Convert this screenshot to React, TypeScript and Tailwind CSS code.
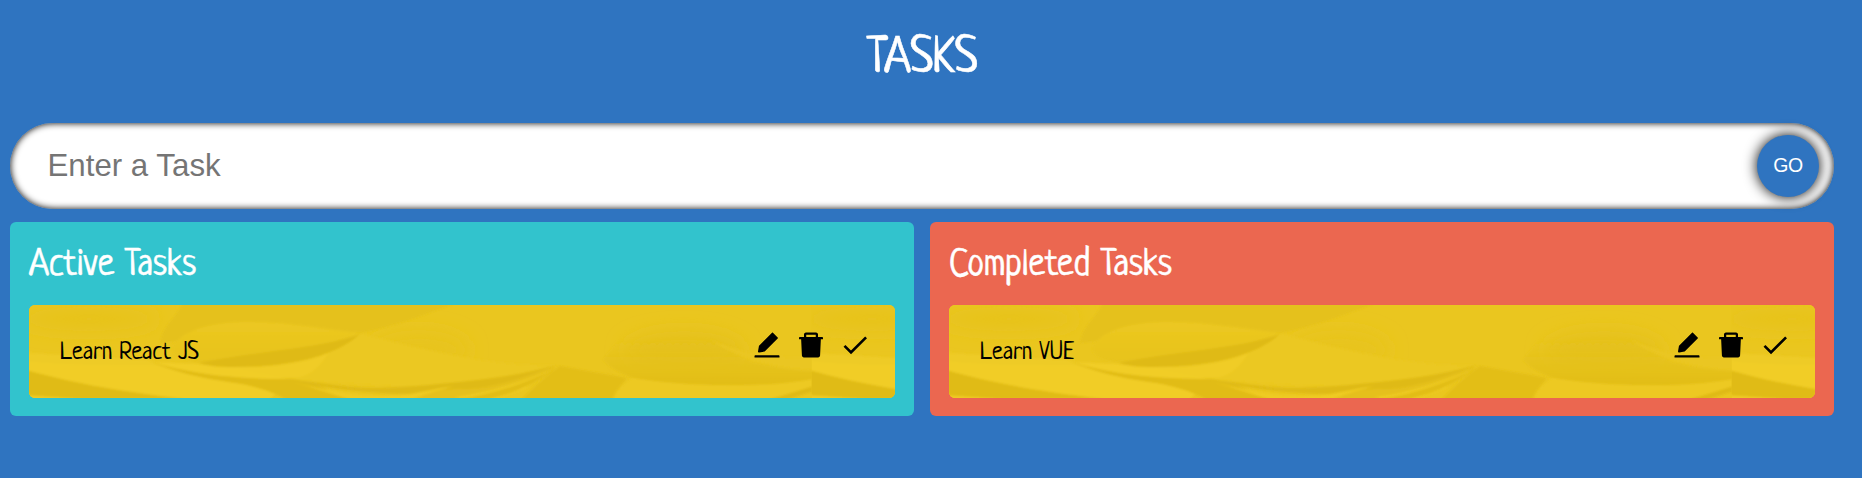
import React from "react";
import { AiFillDelete, AiFillEdit } from "react-icons/ai";
import { MdDone } from "react-icons/md";

const handwriting = "font-['Neucha','Lato',sans-serif]";

function Folds() {
  return (
    <svg
      className="absolute inset-0 h-full w-full"
      viewBox="0 0 866 93"
      preserveAspectRatio="none"
      aria-hidden="true"
    >
      <defs>
        <filter id="soft" x="-5%" y="-20%" width="110%" height="140%">
          <feGaussianBlur stdDeviation="1" />
        </filter>
        <filter id="haze" x="-50%" y="-150%" width="200%" height="400%">
          <feGaussianBlur stdDeviation="9" />
        </filter>
        <linearGradient id="bowl" x1="0" y1="0" x2="0" y2="1">
          <stop offset="0.4" stopColor="#e6c21b" stopOpacity="0" />
          <stop offset="0.75" stopColor="#e5c11a" stopOpacity="0.8" />
          <stop offset="1" stopColor="#e2bd18" />
        </linearGradient>
        <linearGradient id="leaf" x1="0" y1="0" x2="0" y2="1">
          <stop offset="0" stopColor="#ecc821" />
          <stop offset="1" stopColor="#e7c31c" />
        </linearGradient>
        <clipPath id="tileEdge">
          <rect width="782.7" height="93" />
        </clipPath>
        <g id="tile" clipPath="url(#tileEdge)">
          <rect width="783" height="93" fill="#eac61f" />
          <ellipse cx="60" cy="14" rx="70" ry="12" fill="#e7c31c" filter="url(#haze)" />
          <ellipse cx="390" cy="45" rx="50" ry="20" fill="#e8c41c" filter="url(#haze)" />
          <ellipse cx="655" cy="46" rx="60" ry="20" fill="#e5c11a" filter="url(#haze)" />
          <g filter="url(#soft)">
            <path d="M154 -4 C150 12 134 18 131 38 L148 36 C160 24 190 17 218 17 C260 17 295 24 331 28 C365 22 400 8 432 -4Z" fill="#e5c11a" />
            <path d="M146 38 C160 22 190 17 218 17 C260 17 295 24 331 28 C290 45 230 50 171 57 C150 55 138 48 146 38Z" fill="url(#leaf)" />
            <path d="M331 28 C310 48 260 62 204 62 L165 59 L254 74 C320 78 380 86 431 77 C480 72 505 66 528 60 C480 62 420 52 331 28Z" fill="#ebc820" />
            <path d="M175 60 C230 66 280 58 300 47 C292 60 284 70 268 73 L230 72Z" fill="#f0cc25" />
            <path d="M-3 47 C40 54 80 57 121 57 L190 60 L260 74 L240 95 L-3 95Z" fill="#f1cd27" />
            <path d="M0 56 C30 60 90 60 135 60 L120 55 L0 48Z" fill="#eecb25" />
            <path d="M331 29 C295 43 230 46 169 58 C180 61 190 62 204 62 C260 62 305 52 331 29Z" fill="#dfba14" />
            <path d="M-3 65 C40 77 80 85 155 94 L-3 94Z" fill="#e0bb15" />
            <path d="M-3 90 L55 94 L-3 94Z" fill="#efcb25" />
            <path d="M121 57 C165 69 200 74 262 74 C290 78 300 86 322 95 L258 95 C245 87 224 80 200 77 C170 73 145 66 121 57Z" fill="#e1bc16" />
            <path d="M254 74 C290 77 320 84 351 83 C380 82 400 80 431 77 C470 73 500 68 528 60 C505 70 470 82 440 84 C410 86 390 91 352 88 C315 86 285 80 254 74Z" fill="#dfba14" />
            <path d="M262 76 C290 84 320 91 350 91 C380 92 400 84 425 81 L378 95 L322 95Z" fill="#efcb24" />
            <path d="M385 95 C400 86 420 83 435 84 C470 83 500 72 528 61 L500 82 L440 95Z" fill="#e5c01a" />
            <path d="M425 92 C460 88 495 76 522 65 L496 84 L465 95 L440 95Z" fill="#efcb24" />
            <path d="M432 94 C470 88 500 76 526 64 C500 82 480 90 455 95Z" fill="#e2bd17" />
            <path d="M531 61 L598 73 C590 82 585 88 583 95 L492 95 C505 82 515 72 531 61Z" fill="#e3be18" />
            <path d="M574 55 C590 30 620 8 650 0 C670 22 690 45 724 57 C745 62 765 65 785 66 L785 74 C755 80 720 81 691 80 C650 80 620 76 604 73 C590 68 580 62 574 55Z" fill="url(#bowl)" />
            <path d="M604 73 C650 81 730 84 785 74 L785 82 C765 88 755 90 741 95 L585 95 C588 86 592 80 604 73Z" fill="#edc921" />
            <path d="M681 34 C710 48 740 53 785 53 L785 65 C750 64 705 53 681 34Z" fill="#eac620" />
            <path d="M738 95 C755 90 770 86 785 81 L785 86 L757 95Z" fill="#dfba14" />
          </g>
        </g>
      </defs>
      <use href="#tile" />
      <use href="#tile" x="782.7" />
    </svg>
  );
}

type ColumnProps = {
  title: string;
  task: string;
  color: string;
};

function Column({ title, task, color }: ColumnProps) {
  return (
    <section className={`h-[194px] flex-1 rounded-[6px] px-[19px] pt-[21px] ${color}`}>
      <h2
        className={`${handwriting} h-[62px] text-[37.5px] leading-[46px] text-white [-webkit-text-stroke:0.4px_white]`}
      >
        {title}
      </h2>
      <div className="relative flex h-[93px] items-start justify-between overflow-hidden rounded-[6px] bg-[#eac61f] pr-[24.5px] pl-[31px]">
        <Folds />
        <span className={`relative mt-[33px] text-[25px] leading-[30px] text-black ${handwriting}`}>
          {task}
        </span>
        <div className="relative mt-[24px] flex gap-[11.75px] text-[32px] text-black">
          <AiFillEdit />
          <AiFillDelete />
          <MdDone />
        </div>
      </div>
    </section>
  );
}

export default function App() {
  return (
    <main className="h-[478px] w-full overflow-hidden bg-[#2f74c0] pr-[28px] pl-[10px]">
      <h1
        className={`${handwriting} h-[123px] pt-[30px] text-center text-[50px] leading-[60px] text-white [-webkit-text-stroke:0.5px_white]`}
      >
        TASKS
      </h1>
      <form className="flex h-[86px] items-center rounded-full bg-white pr-[15px] shadow-[inset_0_0_7px_black]">
        <input
          className="h-full min-w-0 flex-1 rounded-full bg-transparent pl-[37.5px] font-['Liberation_Sans',sans-serif] text-[31.25px] outline-none placeholder:text-[#757575]"
          placeholder="Enter a Task"
        />
        <button
          type="button"
          className="size-[62px] rounded-full bg-[#2f74c0] font-['Liberation_Sans',sans-serif] text-[19.5px] tracking-[-0.5px] text-white shadow-[0_0_14px_black]"
        >
          GO
        </button>
      </form>
      <div className="mt-[13px] flex gap-[16px]">
        <Column title="Active Tasks" task="Learn React JS" color="bg-[#32c3cd]" />
        <Column title="Completed Tasks" task="Learn VUE" color="bg-[#eb6750]" />
      </div>
    </main>
  );
}
